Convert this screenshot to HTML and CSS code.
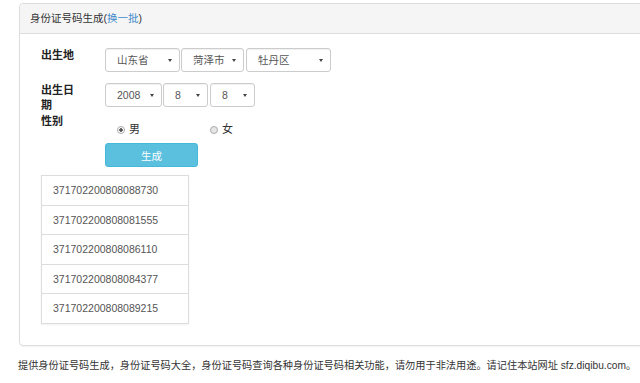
FILE: index.html
```html
<!DOCTYPE html>
<html lang="zh-CN">
<head>
    <meta charset="UTF-8">
    <meta name="viewport" content="width=device-width, initial-scale=1.0">
    <title>身份证号码生成</title>
    <link rel="stylesheet" href="styles.css">
</head>
<body>
    <!-- 面板 -->
    <div class="panel">
        <div class="panel-heading">身份证号码生成(<a href="#">换一批</a>)</div>
        <div class="panel-body">
            <div class="row">
                <div class="label">出生地</div>
                <div class="controls">
                    <div class="sel w75"><span>山东省</span><i></i></div>
                    <div class="sel w63"><span>菏泽市</span><i></i></div>
                    <div class="sel w85"><span>牡丹区</span><i></i></div>
                </div>
            </div>
            <div class="row row-date">
                <div class="label">出生日期</div>
                <div class="controls">
                    <div class="sel w57"><span>2008</span><i></i></div>
                    <div class="sel w45"><span>8</span><i></i></div>
                    <div class="sel w45"><span>8</span><i></i></div>
                </div>
            </div>
            <div class="row row-sex">
                <div class="label">性别</div>
                <div class="controls radios">
                    <label class="radio"><b class="dot checked"></b>男</label>
                    <label class="radio"><b class="dot"></b>女</label>
                </div>
            </div>
            <button class="btn">生成</button>
            <ul class="list-group">
                <li>371702200808088730</li>
                <li>371702200808081555</li>
                <li>371702200808086110</li>
                <li>371702200808084377</li>
                <li>371702200808089215</li>
            </ul>
        </div>
    </div>

    <p class="footer">提供身份证号码生成，身份证号码大全，身份证号码查询各种身份证号码相关功能，请勿用于非法用途。请记住本站网址 sfz.diqibu.com。</p>
</body>
</html>
```

FILE: styles.css
```css
html, body {
    overflow: hidden;
}
body {
    margin: 0;
    background: #fff;
    color: #333;
    font-family: "Liberation Sans", "Noto Sans CJK SC", sans-serif;
    font-size: 10.5px;
}
.panel {
    margin: 3px 0 0 19px;
    width: 640px;
    border: 1px solid #ddd;
    border-radius: 4px;
    box-shadow: 0 1px 1px rgba(0, 0, 0, 0.05);
}
.panel-heading {
    height: 29px;
    line-height: 29px;
    padding-left: 10px;
    background: #f5f5f5;
    border-bottom: 1px solid #ddd;
    border-radius: 3px 3px 0 0;
    color: #333;
}
.panel-heading a {
    color: #428bca;
    text-decoration: none;
}
.panel-body {
    padding: 14px 0 21px 21px;
}
.row {
    display: flex;
    align-items: flex-start;
}
.row-date {
    margin-top: 11px;
}
.label {
    width: 36px;
    margin-right: 28px;
    font-weight: bold;
    font-size: 11px;
    line-height: 15px;
    color: #222;
}
.row-sex .label {
    line-height: 17px;
}
.controls {
    display: flex;
    gap: 1px;
}
.sel {
    position: relative;
    box-sizing: border-box;
    height: 24px;
    line-height: 22px;
    padding-left: 11px;
    border: 1px solid #ccc;
    border-radius: 3px;
    box-shadow: inset 0 1px 1px rgba(0, 0, 0, 0.06);
    color: #555;
    background: #fff;
}
.sel i {
    position: absolute;
    right: 7px;
    top: 10px;
    border-left: 2px solid transparent;
    border-right: 2px solid transparent;
    border-top: 3px solid #444;
}
.w75 { width: 75px; }
.w63 { width: 63px; }
.w85 { width: 85px; margin-left: 1px; }
.w57 { width: 57px; }
.w45 { width: 45px; }
.w45 + .w45 { margin-left: 1px; }
.radios {
    padding-top: 9px;
    gap: 0;
}
.radio {
    display: flex;
    align-items: center;
    width: 93px;
    padding-left: 12px;
    box-sizing: border-box;
    line-height: 15px;
    font-size: 11px;
    color: #333;
}
.dot {
    box-sizing: border-box;
    width: 8px;
    height: 8px;
    margin-right: 4px;
    border: 1px solid #aaa;
    border-radius: 50%;
    background: #e6e6e6;
}
.dot.checked {
    background: radial-gradient(circle, #555 0 1.5px, #fff 2px);
}
.btn {
    display: block;
    margin: 6px 0 0 64px;
    width: 93px;
    height: 24px;
    padding: 0;
    border: 1px solid #46b8da;
    border-radius: 3px;
    background: #5bc0de;
    color: #fff;
    font-family: inherit;
    font-size: 10.5px;
}
.list-group {
    list-style: none;
    margin: 8px 0 0;
    padding: 0;
    width: 148px;
    box-shadow: 0 1px 2px rgba(0, 0, 0, 0.06);
}
.list-group li {
    box-sizing: border-box;
    height: 30.5px;
    line-height: 28px;
    padding-left: 11px;
    border: 1px solid #ddd;
    margin-bottom: -1px;
    color: #555;
}
.list-group li:last-child {
    margin-bottom: 0;
}
.footer {
    margin: 12px 0 0 18px;
    line-height: 16px;
    white-space: nowrap;
    font-size: 10.2px;
    color: #333;
}
```
